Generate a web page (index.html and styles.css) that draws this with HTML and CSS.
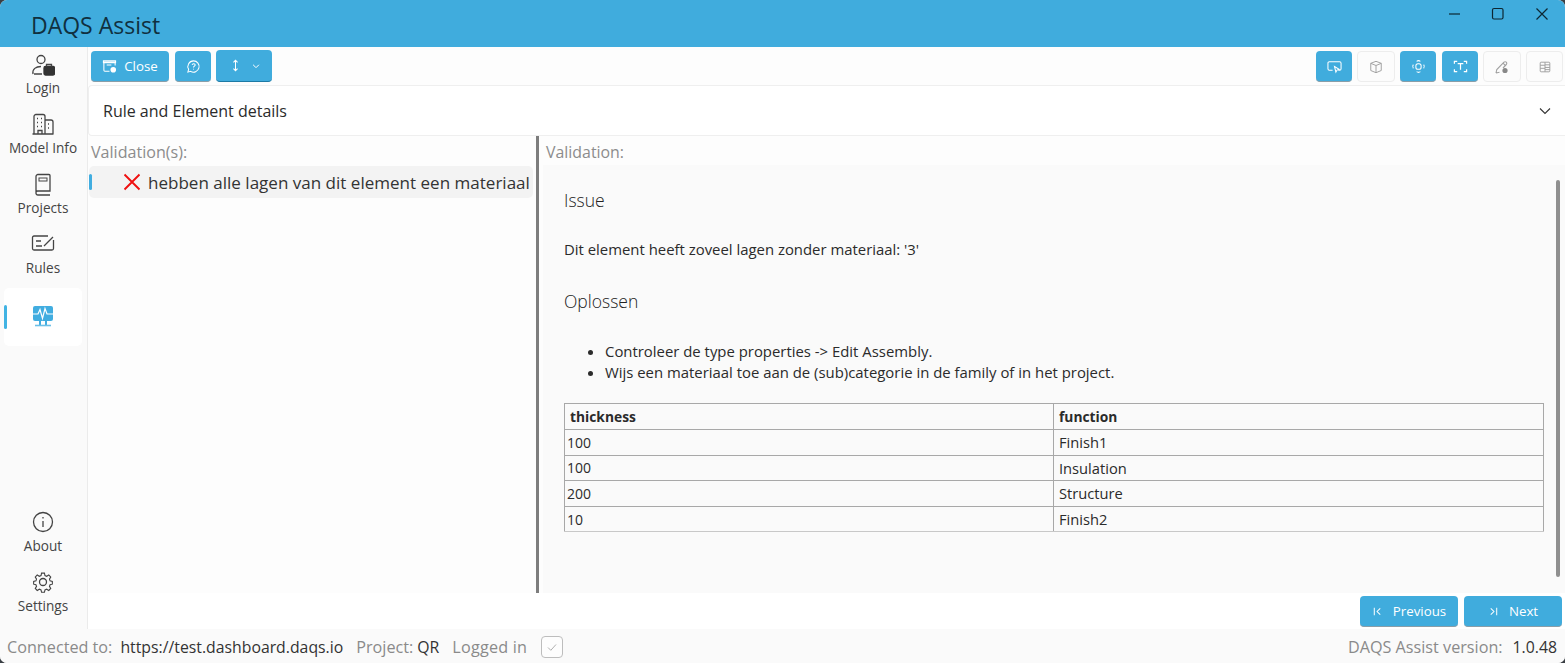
FILE: index.html
```html
<!DOCTYPE html>
<html lang="nl">
<head>
<meta charset="utf-8">
<title>DAQS Assist</title>
<link rel="stylesheet" href="styles.css">
</head>
<body>
<div class="app">
  <header class="titlebar">
    <div class="app-title">DAQS Assist</div>
    <div class="window-controls">
      <svg class="wc" viewBox="0 0 16 16"><path d="M3 8h11"/></svg>
      <svg class="wc" viewBox="0 0 16 16"><rect x="2.500" y="2.500" width="10.500" height="10.500" rx="1.500"/></svg>
      <svg class="wc" viewBox="0 0 16 16"><path d="M2.500 2.500l11 11M13.500 2.500l-11 11"/></svg>
    </div>
  </header>
  <div class="body">
    <nav class="sidebar">
      <div class="nav-top">
        <div class="nav-item">
          <svg class="nav-icon" viewBox="0 0 24 24"><circle cx="10" cy="6.500" r="4"/><path d="M2 21c-1-5 3-7.500 8-7.500"/><path d="M3 21h8"/><rect class="solid" x="13" y="13.500" width="10.500" height="8.500" rx="1.500"/><path d="M15.500 13.500v-2h5v2"/></svg>
          <span>Login</span>
        </div>
        <div class="nav-item">
          <svg class="nav-icon" viewBox="0 0 24 24"><path d="M3 21V3.500a2 2 0 0 1 2-2h7a2 2 0 0 1 2 2V21M14 7h6a2 2 0 0 1 2 2v12M1.500 21h21M6 5.500h1M10 5.500h1M6 9.500h1M10 9.500h1M6 13.500h1M10 13.500h1M17 11h1M17 15h1M7 21v-3.500h4V21"/></svg>
          <span>Model Info</span>
        </div>
        <div class="nav-item">
          <svg class="nav-icon" viewBox="0 0 24 24"><path d="M5 19.500V3.500a2 2 0 0 1 2-2h11a1 1 0 0 1 1 1V18H6.500A1.800 1.800 0 0 0 5 19.500a2 2 0 0 0 2 2.500h12"/><rect x="8" y="5" width="8" height="3" class="thin"/></svg>
          <span>Projects</span>
        </div>
        <div class="nav-item">
          <svg class="nav-icon" viewBox="0 0 24 24"><path d="M17 3H3a1.500 1.500 0 0 0-1.500 1.500v11A1.500 1.500 0 0 0 3 17h18a1.500 1.500 0 0 0 1.500-1.500V7M5 8h5M5 13h6M13 13l9-9"/></svg>
          <span>Rules</span>
        </div>
        <div class="nav-item nav-active">
          <svg class="nav-icon-active" viewBox="0 0 24 24"><rect x="2" y="2" width="20" height="15" rx="2" fill="#41ade0"/><path d="M9 17v4M15 17v4" stroke="#41ade0" stroke-width="2" fill="none"/><path d="M4 21.500h16" stroke="#6cc0e8" stroke-width="1.600" fill="none"/><path d="M2 10h5l2-4.500 2.500 9 2.500-10 2 5.500h6" stroke="#fff" stroke-width="1.200" fill="none"/></svg>
        </div>
      </div>
      <div class="nav-bottom">
        <div class="nav-item nav-item-low">
          <svg class="nav-icon" viewBox="0 0 24 24"><circle cx="12" cy="12" r="9.500"/><path d="M12 11v6M12 7v1.500"/></svg>
          <span>About</span>
        </div>
        <div class="nav-item nav-item-low">
          <svg class="nav-icon" viewBox="0 0 24 24"><circle cx="12" cy="12" r="3.500"/><path d="M10.300 2.500h3.400l.6 2.800 2 .9 2.500-1.500 2.300 2.500-1.500 2.400.7 2 2.700.7v3.200l-2.700.7-.7 1.900 1.500 2.400-2.300 2.400-2.500-1.500-2 .9-.6 2.700h-3.400l-.6-2.700-2-.9-2.500 1.500-2.300-2.400 1.500-2.400-.7-1.900-2.700-.7v-3.200l2.700-.7.700-2-1.500-2.400 2.300-2.500 2.500 1.500 2-.9z" transform="translate(1.800 1) scale(.85)"/></svg>
          <span>Settings</span>
        </div>
      </div>
    </nav>
    <main class="main">
      <div class="toolbar">
        <div class="tool-group">
          <button class="btn btn-close">
            <svg class="btn-icon" viewBox="0 0 16 16"><path d="M8 13H3a1 1 0 0 1-1-1V3.500h12V7M1.500 2h13v2h-13zM5 6.500h5"/><circle class="white" cx="12" cy="11.500" r="3"/></svg>
            <span>Close</span>
          </button>
          <button class="btn btn-square btn-after-close">
            <svg class="btn-icon" viewBox="0 0 16 16"><path d="M8 2a6 6 0 1 1-3 11.200L2 14l.8-3A6 6 0 0 1 8 2zM6.500 6.300c.3-1.800 3.300-1.700 3.300.1 0 1.200-1.800 1.300-1.800 2.600M8 10.500v.8"/></svg>
          </button>
          <button class="btn btn-split">
            <svg class="btn-icon" viewBox="0 0 16 16"><path d="M8 2.500v11M5.800 4.700L8 2.500l2.200 2.200M5.800 11.300L8 13.500l2.200-2.200"/></svg>
            <svg class="btn-caret" viewBox="0 0 12 12"><path d="M2.500 4.500L6 8l3.500-3.500"/></svg>
          </button>
        </div>
        <div class="tool-group">
          <button class="btn btn-square">
            <svg class="btn-icon" viewBox="0 0 16 16"><path d="M6 12H2.500A1.500 1.500 0 0 1 1 10.500v-6A1.500 1.500 0 0 1 2.500 3h11A1.500 1.500 0 0 1 15 4.500v6a1.500 1.500 0 0 1-1.500 1.500H12"/><path d="M8 8l5 3-2.300.8L9.500 14z"/></svg>
          </button>
          <button class="btn btn-ghost">
            <svg class="btn-icon" viewBox="0 0 16 16"><path d="M8 1.500l6 2.300v8.200l-6 2.500-6-2.500V3.800zM2 3.800l6 2.500 6-2.500M8 6.300v8.200"/></svg>
          </button>
          <button class="btn btn-square">
            <svg class="btn-icon" viewBox="0 0 16 16"><rect x="5.200" y="5" width="5.600" height="6" rx="2.200"/><path d="M6 2.500Q8 1 10 2.500M6 13.500Q8 15 10 13.500M2.500 6Q1 8 2.500 10M13.500 6Q15 8 13.500 10"/></svg>
          </button>
          <button class="btn btn-square btn-shift">
            <svg class="btn-icon btn-icon-t" viewBox="0 0 16 16"><path d="M1.500 5V2.500h3M11.500 2.500h3V5M1.500 11v2.500h3M14.500 11v2.500h-3M5 5h6M8 5v6.500"/></svg>
          </button>
          <button class="btn btn-ghost">
            <svg class="btn-icon btn-icon-pen" viewBox="0 0 16 16"><path d="M2 14l.8-3.500L10 3.200a1.500 1.500 0 0 1 2.300 2.300L9 9M2 14l3.500-.8M9 4.200l2.500 2.500"/><circle class="grey" cx="11" cy="11.500" r="2.600"/></svg>
          </button>
          <button class="btn btn-ghost btn-narrow">
            <svg class="btn-icon" viewBox="0 0 16 16"><rect x="2.500" y="2.500" width="11" height="11" rx="1"/><path d="M8 2.500v11M2.500 6h5.500M2.500 9.500h5.500M8 5.500h5.500M8 8.500h5.500M8 11h5.500"/></svg>
          </button>
        </div>
      </div>
      <div class="expander">
        <span>Rule and Element details</span>
        <svg class="chevron" viewBox="0 0 12 12"><path d="M1 3.500L6 8.500l5-5"/></svg>
      </div>
      <div class="split">
        <section class="left">
          <div class="pane-label">Validation(s):</div>
          <div class="list-item">
            <span class="marker"></span>
            <svg class="cross" viewBox="0 0 18 18"><path d="M1.500 1.500l15 15M16.500 1.500l-15 15"/></svg>
            <span class="list-text">hebben alle lagen van dit element een materiaal</span>
          </div>
        </section>
        <div class="splitter"></div>
        <section class="right">
          <div class="pane-label pane-label-right">Validation:</div>
          <div class="doc">
            <div class="thumb"></div>
            <h2>Issue</h2>
            <p>Dit element heeft zoveel lagen zonder materiaal: '3'</p>
            <h2 class="h-solve">Oplossen</h2>
            <ul>
              <li>Controleer de type properties -&gt; Edit Assembly.</li>
              <li>Wijs een materiaal toe aan de (sub)categorie in de family of in het project.</li>
            </ul>
            <table>
              <thead><tr><th class="c1">thickness</th><th>function</th></tr></thead>
              <tbody>
                <tr><td>100</td><td>Finish1</td></tr>
                <tr><td>100</td><td>Insulation</td></tr>
                <tr><td>200</td><td>Structure</td></tr>
                <tr><td>10</td><td>Finish2</td></tr>
              </tbody>
            </table>
          </div>
        </section>
      </div>
      <div class="pager">
        <button class="btn btn-page">
          <svg class="btn-icon-sm" viewBox="0 0 12 12"><path d="M2.500 2v8M9 2.500L5.500 6 9 9.500"/></svg>
          <span>Previous</span>
        </button>
        <button class="btn btn-page">
          <svg class="btn-icon-sm" viewBox="0 0 12 12"><path d="M9.500 2v8M3 2.500L6.500 6 3 9.500"/></svg>
          <span>Next</span>
        </button>
      </div>
    </main>
  </div>
  <footer class="statusbar">
    <span class="muted">Connected to:</span>
    <span class="value url">https://test.dashboard.daqs.io</span>
    <span class="muted gap-project">Project:</span>
    <span class="value qr">QR</span>
    <span class="muted gap-logged">Logged in</span>
    <span class="checkbox"><svg viewBox="0 0 12 12"><path d="M2 6.500l2.800 2.800L10 3.500"/></svg></span>
    <span class="spacer"></span>
    <span class="muted">DAQS Assist version:</span>
    <span class="value version">1.0.48</span>
  </footer>
</div>
</body>
</html>
```
FILE: styles.css
```css
* { box-sizing: border-box; }
html, body { margin: 0; height: 100%; background: #3a3f44; overflow: hidden; }
body { font-family: "Open Sans", "Noto Sans", sans-serif; color: #2b2b2b; }
.app {
  width: 1565px; height: 663px; display: flex; flex-direction: column;
  background: #fafafa; border-radius: 7px; overflow: hidden;
}
.titlebar {
  height: 47px; flex: none; background: #40acdd; display: flex;
  align-items: flex-start; justify-content: space-between;
}
.app-title { font-size: 23px; color: #10303f; margin: 10px 0 0 31px; line-height: 30px; }
.window-controls { display: flex; gap: 28px; padding: 6px 15px 0 0; }
.wc { width: 16px; height: 16px; fill: none; stroke: #0d2733; stroke-width: 1.200; }

.body { flex: 1; display: flex; min-height: 0; }
.sidebar {
  width: 88px; flex: none; border-right: 1px solid #ebebeb; display: flex;
  flex-direction: column; justify-content: space-between; background: #fafafa;
}
.nav-top, .nav-bottom { display: flex; flex-direction: column; padding-top: 3px; }
.nav-bottom { padding: 0 0 2px; }
.nav-item {
  height: 60px; display: flex; flex-direction: column; align-items: center;
  font-size: 13.600px; color: #444; padding-top: 3px; width: 86px;
}
.nav-item span { line-height: 18px; margin-top: 2px; }
.nav-item-low span { margin-top: 3px; }
.nav-icon { width: 24px; height: 24px; fill: none; stroke: #444; stroke-width: 1.300; flex: none; }
.nav-icon .solid { fill: #333; stroke: #333; }
.nav-icon .thin { stroke-width: 1; }
.nav-active {
  width: 78px; height: 58px; margin: -2px 0 0 4px; background: #fff; border-radius: 5px;
  position: relative; justify-content: center; padding: 0 0 3px;
}
.nav-active::before {
  content: ""; position: absolute; left: 0; top: 17px; width: 3px; height: 24px;
  background: #41b3e3; border-radius: 2px;
}
.nav-icon-active { width: 24px; height: 24px; }

.main { flex: 1; display: flex; flex-direction: column; min-width: 0; background: #fff; }
.toolbar {
  height: 38px; flex: none; display: flex; justify-content: space-between;
  padding: 4px 2px 0 3px; background: #fdfdfd;
}
.tool-group { display: flex; gap: 5px; align-items: flex-start; }
.btn {
  height: 31px; border: 0; border-radius: 4px; background: #40acdd; color: #fff;
  font: inherit; font-size: 13.300px; display: flex; align-items: center; justify-content: center;
  padding: 0; border-bottom: 1px solid #8a9ea8;
}
.btn-close { width: 78px; gap: 7px; }
.btn-square { width: 36px; }
.btn-after-close { margin-left: 1px; }
.btn-shift { margin-left: 1px; }
.btn-split { width: 56px; height: 32px; margin-top: -1px; gap: 8px; border-bottom-color: #1d7aa5; }
.btn-ghost { width: 38px; background: #fcfcfc; border: 1px solid #ededed; }
.btn-narrow { width: 37px; }
.btn-icon { width: 15px; height: 15px; fill: none; stroke: #fff; stroke-width: 1.100; }
.btn-icon-t { stroke-width: 1.300; }
.btn-icon .white { fill: #fff; stroke: none; }
.btn-ghost .btn-icon { stroke: #a0a0a0; width: 14px; height: 14px; }
.btn-ghost .btn-icon-pen { width: 16px; height: 16px; }
.btn-ghost .btn-icon .grey { fill: #888; stroke: none; }
.btn-caret { width: 10px; height: 10px; fill: none; stroke: #fff; stroke-width: 1.200; }

.expander {
  height: 51px; flex: none; border: 1px solid #efefef; border-right: 0;
  border-radius: 4px 0 0 4px;
  display: flex; align-items: center; justify-content: space-between;
  padding: 0 14px 0 14px; font-size: 16px; color: #2b2b2b; background: #fff;
}
.chevron { width: 12px; height: 12px; fill: none; stroke: #333; stroke-width: 1.100; }

.split { flex: 1; min-height: 0; display: flex; background: #fdfdfd; }
.left { width: 448px; flex: none; padding: 0 3px 0 1px; }
.pane-label { font-size: 16.100px; color: #8c8c8c; line-height: 20px; padding: 6px 0 0 2px; height: 30px; }
.list-item {
  height: 32px; background: #f3f3f3; border-radius: 5px; display: flex; align-items: center;
  position: relative; padding-left: 34px;
}
.marker { position: absolute; left: 0; top: 8px; width: 3px; height: 16px; background: #41ade0; border-radius: 2px; }
.cross { width: 18px; height: 18px; fill: none; stroke: #f01010; stroke-width: 1.900; flex: none; }
.list-text { font-size: 17.050px; margin-left: 7px; color: #333; white-space: nowrap; }
.splitter { width: 3px; flex: none; background: #7d7d7d; }
.right { flex: 1; min-width: 0; display: flex; flex-direction: column; }
.pane-label-right { padding: 6px 0 0 7px; height: 29px; font-size: 15.900px; }
.doc {
  flex: 1; min-height: 0; margin-left: 4px; background: #fafafa; padding: 24px 21px 0 21px;
  position: relative; font-size: 14.900px; color: #2b2b2b;
}
.thumb { position: absolute; right: 5px; top: 15px; width: 4px; height: 397px; background: #8f8f8f; border-radius: 2px; }
.doc h2 { font-size: 17.500px; font-weight: 300; margin: 0; line-height: 22px; color: #222; }
.doc p { margin: 28px 0 0; line-height: 20px; }
.doc .h-solve { margin-top: 31px; }
.doc ul { margin: 29px 0 0; padding: 0 0 0 41px; line-height: 20px; }
.doc li + li { margin-top: 1px; }
.doc table { width: 980px; margin-top: 21px; border-collapse: collapse; table-layout: fixed; font-size: 14.700px; }
.doc th, .doc td { border: 1px solid #a8a8a8; text-align: left; padding: 0 5px; height: 25.600px; font-weight: 400; border-bottom-width: 1.500px; }
.doc td:first-child { padding: 0 2px; font-size: 14px; }
.doc th { font-weight: 700; height: 26px; font-size: 13.800px; }
.doc .c1 { width: 489px; }
.doc tbody tr:last-child td { border-bottom-color: #c8c8c8; }
.pager { height: 36px; flex: none; display: flex; justify-content: flex-end; gap: 6px; padding: 3px 3px 0 0; background: #fff; }
.btn-page { width: 98px; gap: 10px; }
.btn-icon-sm { width: 11px; height: 11px; fill: none; stroke: #fff; stroke-width: 1.100; }

.statusbar {
  height: 34px; flex: none; display: flex; align-items: center; padding: 1px 8px 0 7px;
  font-size: 16.200px; background: #fafafa; white-space: nowrap;
}
.muted { color: #8a8a8a; }
.value { color: #333; font-size: 15.800px; }
.url { margin-left: 8px; }
.gap-project { margin-left: 13px; }
.qr { margin-left: 4px; }
.gap-logged { margin-left: 13px; letter-spacing: .2px; }
.checkbox {
  width: 22px; height: 22px; margin-left: 14px; border: 1px solid #bdbdbd; border-radius: 4px;
  display: flex; align-items: center; justify-content: center; background: #fdfdfd;
}
.checkbox svg { width: 12px; height: 12px; fill: none; stroke: #b0b0b0; stroke-width: 1; }
.spacer { flex: 1; }
.version { margin-left: 10px; }
```
